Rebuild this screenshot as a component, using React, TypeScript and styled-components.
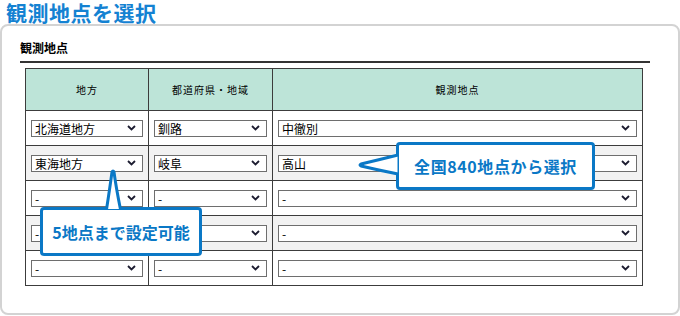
import styled, { createGlobalStyle } from 'styled-components'

const BLUE = '#0a78c6'

const GlobalStyle = createGlobalStyle`
  html, body {
    margin: 0;
    padding: 0;
    background: #ffffff;
  }
  body {
    font-family: "Noto Sans CJK JP", "Noto Sans", sans-serif;
    color: #000;
  }
`

type Row = {
  region: string
  prefecture: string
  point: string
}

const rows: Row[] = [
  { region: '北海道地方', prefecture: '釧路', point: '中徹別' },
  { region: '東海地方', prefecture: '岐阜', point: '高山' },
  { region: '-', prefecture: '-', point: '-' },
  { region: '-', prefecture: '-', point: '-' },
  { region: '-', prefecture: '-', point: '-' },
]

const Chevron = () => (
  <svg width="9" height="6" viewBox="0 0 9 6">
    <path d="M1 1 L4.5 4.5 L8 1" fill="none" stroke="#1c1c30" strokeWidth="1.8" />
  </svg>
)

const FakeSelect = ({ value }: { value: string }) => (
  <SelectBox>
    <SelectText>{value}</SelectText>
    <Chevron />
  </SelectBox>
)

export default function App() {
  return (
    <Page>
      <GlobalStyle />
      <Title>観測地点を選択</Title>
      <Panel>
        <SectionHeading>観測地点</SectionHeading>
        <PointTable>
          <colgroup>
            <col style={{ width: 123 }} />
            <col style={{ width: 124 }} />
            <col />
          </colgroup>
          <thead>
            <tr>
              <HeadCell>地方</HeadCell>
              <HeadCell>都道府県・地域</HeadCell>
              <HeadCell>観測地点</HeadCell>
            </tr>
          </thead>
          <tbody>
            {rows.map((row, i) => (
              <BodyRow key={i} $shaded={i % 2 === 1}>
                <BodyCell>
                  <FakeSelect value={row.region} />
                </BodyCell>
                <BodyCell>
                  <FakeSelect value={row.prefecture} />
                </BodyCell>
                <BodyCell>
                  <FakeSelect value={row.point} />
                </BodyCell>
              </BodyRow>
            ))}
          </tbody>
        </PointTable>

        <Bubble style={{ left: 394, top: 116, width: 199, height: 48 }}>
          <BubbleBox $spacing={0.6}>全国840地点から選択</BubbleBox>
          <TailLeft width="46" height="30" viewBox="0 0 46 30">
            <path d="M41.5 5 Q 22 10 5 14 Q 3 15 5 16 Q 22 20 41.5 24 Z" fill="#fff" />
            <path
              d="M42 5 Q 22 10 5 14 Q 3 15 5 16 Q 22 20 42 24"
              fill="none"
              stroke={BLUE}
              strokeWidth="3"
              strokeLinejoin="round"
            />
          </TailLeft>
        </Bubble>

        <Bubble style={{ left: 38, top: 181, width: 162, height: 49 }}>
          <BubbleBox $spacing={0}>5地点まで設定可能</BubbleBox>
          <TailUp width="28" height="46" viewBox="0 0 28 46">
            <path d="M7 42 Q 10 20 12 5 Q 13 3 14 5 Q 16 20 20 42 Z" fill="#fff" />
            <path
              d="M6.5 42.5 Q 10 20 12 5 Q 13 3 14 5 Q 16 20 20.5 42.5"
              fill="none"
              stroke={BLUE}
              strokeWidth="3"
              strokeLinejoin="round"
            />
          </TailUp>
        </Bubble>
      </Panel>
    </Page>
  )
}

const Page = styled.div`
  width: 680px;
  height: 316px;
  overflow: hidden;
`
const Title = styled.h1`
  margin: 0;
  padding-left: 6px;
  height: 24px;
  font-size: 21px;
  line-height: 25px;
  font-weight: 700;
  color: #1482d2;
  letter-spacing: 0.5px;
`
const Panel = styled.div`
  position: relative;
  box-sizing: border-box;
  height: 291px;
  border: 2px solid #d3d3d3;
  border-radius: 8px;
  padding: 12px 28px 0 18px;
`
const SectionHeading = styled.h2`
  margin: 0;
  font-size: 12px;
  line-height: 20px;
  font-weight: 700;
  padding-bottom: 3px;
  border-bottom: 2px solid #333;
`
const PointTable = styled.table`
  width: 618px;
  margin: 5px 0 0 5px;
  border-collapse: collapse;
  table-layout: fixed;
`
const HeadCell = styled.th`
  height: 41px;
  padding: 0;
  background: #bde4d8;
  border: 1px solid #3c3c3c;
  font-size: 10px;
  font-weight: 400;
  letter-spacing: 1px;
  text-align: center;
  vertical-align: middle;
`
const BodyRow = styled.tr<{ $shaded: boolean }>`
  background: ${(p) => (p.$shaded ? '#f2f2f2' : '#ffffff')};
`
const BodyCell = styled.td`
  height: 34px;
  padding: 0 5px;
  border: 1px solid #3c3c3c;
  vertical-align: middle;
`
const SelectBox = styled.div`
  box-sizing: border-box;
  display: flex;
  align-items: center;
  justify-content: space-between;
  height: 17px;
  padding: 0 6px 0 3px;
  background: #fff;
  border: 1px solid #6e6e6e;
`
const SelectText = styled.span`
  font-size: 12px;
  line-height: 15px;
  white-space: nowrap;
`
const Bubble = styled.div`
  position: absolute;
`
const BubbleBox = styled.div<{ $spacing: number }>`
  box-sizing: border-box;
  width: 100%;
  height: 100%;
  display: flex;
  align-items: center;
  justify-content: center;
  background: #fff;
  border: 3px solid ${BLUE};
  border-radius: 4px;
  color: ${BLUE};
  font-size: 16px;
  font-weight: 700;
  letter-spacing: ${(p) => p.$spacing}px;
  white-space: nowrap;
`
const TailLeft = styled.svg`
  position: absolute;
  left: -40px;
  top: 8px;
  overflow: visible;
`
const TailUp = styled.svg`
  position: absolute;
  left: 60px;
  top: -40px;
  overflow: visible;
`
